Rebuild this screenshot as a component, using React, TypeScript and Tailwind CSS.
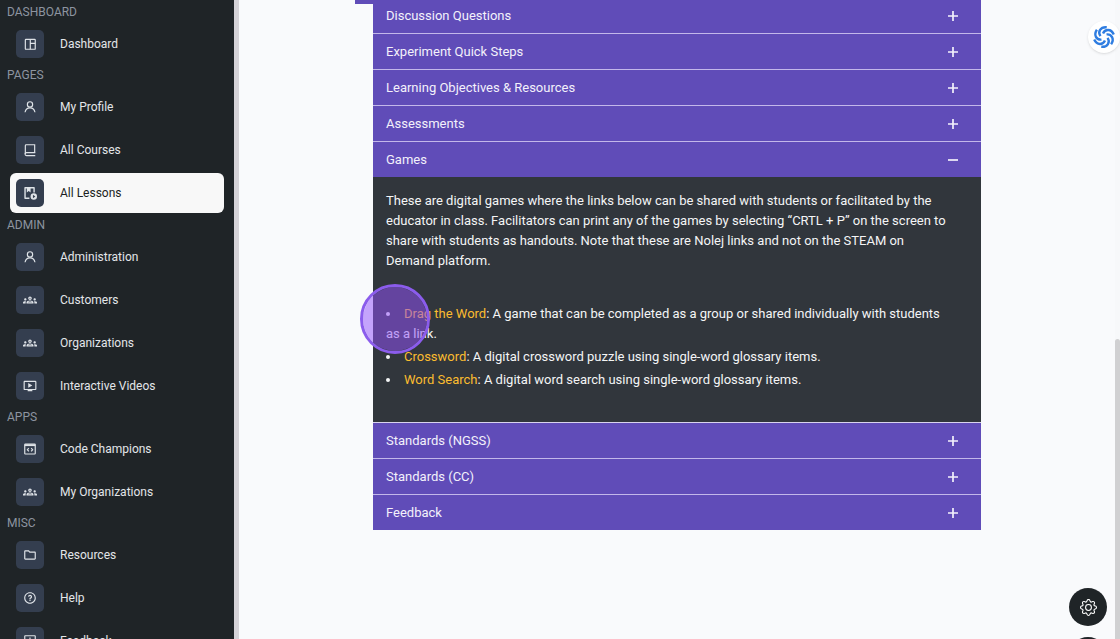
import { useState } from "react";
import type { ReactNode } from "react";
import type { IconType } from "react-icons";
import { BsGear } from "react-icons/bs";
import { MdOndemandVideo, MdOutlineFeedback, MdOutlineFolder, MdOutlineGroups } from "react-icons/md";
import { RiQuestionLine } from "react-icons/ri";

type IconProps = { className?: string };

type NavItem = {
  label: string;
  icon: IconType | ((props: IconProps) => ReactNode);
};

type NavGroup = {
  title: string;
  items: NavItem[];
};

function PanelsIcon({ className }: IconProps) {
  return (
    <svg viewBox="0 0 24 24" fill="none" stroke="currentColor" strokeWidth="2" className={className} aria-hidden="true">
      <rect x="4" y="4" width="17" height="17" rx="1" />
      <path d="M12.500 4v17M12.500 11H21" />
    </svg>
  );
}

function PersonIcon({ className }: IconProps) {
  return (
    <svg viewBox="0 0 24 24" fill="none" stroke="currentColor" strokeWidth="2" className={className} aria-hidden="true">
      <circle cx="12" cy="7.500" r="4.500" />
      <path d="M3.500 21c.8-4.500 4-7.500 8.500-7.500s7.700 3 8.500 7.500" />
    </svg>
  );
}

function BookIcon({ className }: IconProps) {
  return (
    <svg viewBox="0 0 24 24" fill="none" stroke="currentColor" strokeWidth="2" className={className} aria-hidden="true">
      <path d="M20 16.500V3H5.500C4.500 3 4 3.600 4 4.500V19" />
      <path d="M21 16.500H6a2.200 2.200 0 0 0 0 5h15" />
    </svg>
  );
}

function LessonIcon({ className }: IconProps) {
  return (
    <svg viewBox="0 0 24 24" fill="none" className={className} aria-hidden="true">
      <path d="M11 21H3.500V3H19v8" stroke="currentColor" strokeWidth="2.400" strokeLinejoin="round" />
      <path d="M6.500 3H13v8l-3.200-2.400L6.500 11z" fill="currentColor" />
      <circle cx="18.500" cy="18" r="5.500" fill="currentColor" />
      <path d="M17 15v6l4.200-3z" fill="#343e4f" />
    </svg>
  );
}

function CodeWindowIcon({ className }: IconProps) {
  return (
    <svg viewBox="0 0 24 24" fill="none" stroke="currentColor" strokeWidth="2" className={className} aria-hidden="true">
      <rect x="3" y="3.500" width="18" height="17" rx="1" />
      <path d="M3 5.500h18" strokeWidth="3" />
      <path d="M10 10.500 7.500 13.200 10 16M14 10.500l2.500 2.700L14 16" />
    </svg>
  );
}

const navGroups: NavGroup[] = [
  { title: "DASHBOARD", items: [{ label: "Dashboard", icon: PanelsIcon }] },
  {
    title: "PAGES",
    items: [
      { label: "My Profile", icon: PersonIcon },
      { label: "All Courses", icon: BookIcon },
      { label: "All Lessons", icon: LessonIcon },
    ],
  },
  {
    title: "ADMIN",
    items: [
      { label: "Administration", icon: PersonIcon },
      { label: "Customers", icon: MdOutlineGroups },
      { label: "Organizations", icon: MdOutlineGroups },
      { label: "Interactive Videos", icon: MdOndemandVideo },
    ],
  },
  {
    title: "APPS",
    items: [
      { label: "Code Champions", icon: CodeWindowIcon },
      { label: "My Organizations", icon: MdOutlineGroups },
    ],
  },
  {
    title: "MISC",
    items: [
      { label: "Resources", icon: MdOutlineFolder },
      { label: "Help", icon: RiQuestionLine },
      { label: "Feedback", icon: MdOutlineFeedback },
    ],
  },
];

const sections = [
  "Discussion Questions",
  "Experiment Quick Steps",
  "Learning Objectives & Resources",
  "Assessments",
  "Games",
  "Standards (NGSS)",
  "Standards (CC)",
  "Feedback",
];

const games = [
  { name: "Drag the Word", text: "A game that can be completed as a group or shared individually with students as a link." },
  { name: "Crossword", text: "A digital crossword puzzle using single-word glossary items." },
  { name: "Word Search", text: "A digital word search using single-word glossary items." },
];

function Sidebar({ active }: { active: string }) {
  return (
    <nav className="w-[239px] shrink-0 overflow-hidden border-r-[5px] border-[#d5d3d8] bg-[#1f2427] pt-0.5">
      {navGroups.map((group) => (
        <div key={group.title} className="not-first:-mt-px not-first:pt-px">
          <h2 className="h-5 pl-[7px] text-xs leading-5 text-[#8d94a0]">{group.title}</h2>
          <ul>
            {group.items.map(({ label, icon: Icon }) => (
              <li key={label} className="px-2.5 py-0.5">
                <a
                  href="#"
                  className={
                    label === active
                      ? "flex h-10 items-center gap-4 rounded-md bg-[#f8f8f8] pl-1.5 text-[#1b1e21]"
                      : "flex h-[39px] items-center gap-4 rounded-md pl-1.5 text-[#e3e6e9]"
                  }
                >
                  <span className="flex size-7 items-center justify-center rounded-[5px] bg-[#343e4f] text-[#dfe3e8]">
                    <Icon className="size-3.5" />
                  </span>
                  <span className="text-xs">{label}</span>
                </a>
              </li>
            ))}
          </ul>
        </div>
      ))}
    </nav>
  );
}

function GamesPanel() {
  return (
    <div className="relative border-b border-[#d9d3ee] bg-[#31363c] pt-3.5 pr-7 pb-8 pl-[13px] text-[13px] leading-5 text-[#f4f5f6]">
      <p>
        These are digital games where the links below can be shared with students or facilitated by the educator in
        class. Facilitators can print any of the games by selecting “CRTL + P” on the screen to share with students as
        handouts. Note that these are Nolej links and not on the STEAM on Demand platform.
      </p>
      <ul className="mt-[33px] list-inside list-disc space-y-[3px]">
        {games.map((game) => (
          <li key={game.name}>
            <a href="#" className="text-[#fbbc2f]">
              {game.name}
            </a>
            : {game.text}
          </li>
        ))}
      </ul>
      {/* click marker */}
      <span className="pointer-events-none absolute top-[107px] -left-[13px] size-[70px] rounded-full border-[3px] border-[#8b5cec] bg-[#9353fc]/52 bg-clip-padding" />
    </div>
  );
}

function Accordion() {
  const [open, setOpen] = useState("Games");

  return (
    <div className="-mt-1.5">
      {sections.map((title, i) => {
        const isOpen = open === title;
        const hasBorder = !isOpen && i < sections.length - 1;
        return (
          <section key={title}>
            <button
              type="button"
              aria-expanded={isOpen}
              onClick={() => setOpen(isOpen ? "" : title)}
              className={
                hasBorder
                  ? "flex h-9 w-full items-center justify-between border-b border-[#c3b7ea] bg-[#604cb8] pr-5 pl-[13px] text-[13px] text-[#f3f1fb]"
                  : "flex h-[35px] w-full items-center justify-between bg-[#604cb8] pr-5 pl-[13px] text-[13px] text-[#f3f1fb]"
              }
            >
              {title}
              <svg viewBox="0 0 16 16" className="size-4" stroke="currentColor" strokeWidth="1.7" aria-hidden="true">
                <path d={isOpen ? "M3 8h10" : "M3 8h10M8 3v10"} />
              </svg>
            </button>
            {isOpen && title === "Games" && <GamesPanel />}
          </section>
        );
      })}
    </div>
  );
}

function SwirlLogo() {
  return (
    <svg viewBox="-12 -12 24 24" className="size-6" fill="none" stroke="#2f7de1" strokeWidth="2.400" aria-hidden="true">
      {[0, 60, 120, 180, 240, 300].map((angle) => (
        <path key={angle} transform={`rotate(${angle})`} d="M-1 -3.500C1 -8 7 -8.500 9.800 -2.500" />
      ))}
    </svg>
  );
}

export default function App() {
  return (
    <div className="relative flex h-screen overflow-hidden bg-[#f9fafc] font-[Roboto,sans-serif]">
      <Sidebar active="All Lessons" />

      <main className="min-w-0 flex-1 overflow-hidden">
        <div className="mx-auto max-w-[608px]">
          <div className="-mt-3 -ml-[18px] h-4 bg-[#604cb8]" />
          <Accordion />
        </div>
      </main>

      <div className="flex w-[5px] shrink-0 flex-col justify-end bg-[#f7f8fa]">
        <div className="h-[47%] rounded-t-full bg-[#d0d0d2]" />
      </div>

      <button
        type="button"
        aria-label="Open assistant"
        className="absolute top-[21px] right-0 flex size-8 items-center justify-center rounded-full bg-white shadow"
      >
        <SwirlLogo />
      </button>

      <div className="absolute top-[588px] right-[13px] flex flex-col gap-[11px]">
        <button
          type="button"
          aria-label="Settings"
          className="flex size-[38px] items-center justify-center rounded-full bg-[#1f2427] text-white"
        >
          <BsGear className="size-[17px]" />
        </button>
        <button type="button" aria-label="More" className="size-[38px] rounded-full bg-[#1f2427]" />
      </div>
    </div>
  );
}
